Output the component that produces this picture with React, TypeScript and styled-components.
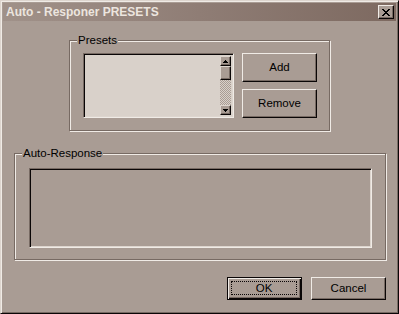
import React from 'react';
import styled, { createGlobalStyle } from 'styled-components';

const face = '#a99c94';
const light = '#ddd5ce';
const white = '#f0ebe6';
const shadow = '#776a63';
const dark = '#0a0606';
const field = '#d9d1ca';

const GlobalStyle = createGlobalStyle`
  html, body {
    margin: 0;
    padding: 0;
    background: ${face};
  }
  body {
    font-family: "Liberation Sans", Arial, sans-serif;
    font-size: 11px;
    color: #000;
  }
`;

const Window = styled.div`
  box-sizing: border-box;
  width: 399px;
  height: 314px;
  background: ${face};
  border: 1px solid;
  border-color: ${light} ${dark} ${dark} ${light};
  box-shadow: inset 1px 1px 0 ${white}, inset -1px -1px 0 ${shadow};
  padding: 2px;
  display: flex;
  flex-direction: column;
`;

const TitleBar = styled.div`
  height: 18px;
  display: flex;
  align-items: center;
  justify-content: space-between;
  padding: 0 2px 0 3px;
  background: linear-gradient(90deg, #a09189 0%, #8f7d75 50%, #7d6960 100%);
`;

const Title = styled.span`
  font-weight: bold;
  font-size: 12px;
  color: #ece5df;
`;

const CloseButton = styled.div`
  box-sizing: border-box;
  width: 16px;
  height: 14px;
  background: ${face};
  border: 1px solid;
  border-color: ${white} ${dark} ${dark} ${white};
  box-shadow: inset -1px -1px 0 ${shadow};
  display: flex;
  align-items: center;
  justify-content: center;
`;

const Body = styled.div`
  flex: 1;
  display: flex;
  flex-direction: column;
`;

const Group = styled.div<{ $w: number; $h: number }>`
  position: relative;
  box-sizing: border-box;
  width: ${(p) => p.$w}px;
  height: ${(p) => p.$h}px;
  border: 1px solid ${shadow};
  box-shadow: inset 1px 1px 0 ${white}, 1px 1px 0 ${white};
`;

const Legend = styled.span`
  position: absolute;
  top: -7px;
  left: 7px;
  padding: 0 1px;
  line-height: 13px;
  font-size: 11.5px;
  background: ${face};
`;

const PresetsGroup = styled(Group)`
  margin: 19px 0 0 66px;
  padding: 12px 0 0 13px;
  display: flex;
  gap: 8px;
`;

const ResponseGroup = styled(Group)`
  margin: 22px 0 0 11px;
  padding: 14px 0 0 14px;
`;

const Sunken = styled.div`
  box-sizing: border-box;
  border: 1px solid;
  border-color: ${shadow} ${white} ${white} ${shadow};
  box-shadow: inset 1px 1px 0 ${dark}, inset -1px -1px 0 ${light};
`;

const ListBox = styled(Sunken)`
  width: 151px;
  height: 65px;
  background: ${field};
  display: flex;
  justify-content: flex-end;
  padding: 2px;
`;

const ScrollBar = styled.div`
  width: 11px;
  display: flex;
  flex-direction: column;
`;

const ScrollPart = styled.div<{ $h: number }>`
  box-sizing: border-box;
  height: ${(p) => p.$h}px;
  background: ${face};
  border: 1px solid;
  border-color: ${light} ${dark} ${dark} ${light};
  box-shadow: inset -1px -1px 0 ${shadow};
  display: flex;
  align-items: center;
  justify-content: center;
`;

const Track = styled.div`
  flex: 1;
  background: repeating-conic-gradient(${field} 0 25%, ${face} 0 50%) 0 0 / 2px 2px;
`;

const ButtonColumn = styled.div`
  display: flex;
  flex-direction: column;
  gap: 7px;
`;

const Button = styled.div<{ $h: number }>`
  box-sizing: border-box;
  width: 75px;
  height: ${(p) => p.$h}px;
  background: ${face};
  border: 1px solid;
  border-color: ${white} ${dark} ${dark} ${white};
  box-shadow: inset -1px -1px 0 ${shadow};
  display: flex;
  align-items: center;
  justify-content: center;
  font-size: 11.5px;
  padding-bottom: 1px;
`;

const DefaultButton = styled(Button)`
  border: 1px solid ${dark};
  box-shadow: inset 1px 1px 0 ${white}, inset -1px -1px 0 ${dark}, inset -2px -2px 0 ${shadow};
  padding: 3px 4px 4px 3px;
`;

const FocusRect = styled.div`
  flex: 1;
  align-self: stretch;
  border: 1px dotted ${dark};
  display: flex;
  align-items: center;
  justify-content: center;
`;

const ResponseBox = styled(Sunken)`
  width: 343px;
  height: 80px;
  background: ${face};
`;

const Footer = styled.div`
  display: flex;
  justify-content: flex-end;
  gap: 9px;
  margin: 17px 10px 0 0;
`;

const Arrow = ({ up }: { up?: boolean }) => (
  <svg width="5" height="3" viewBox="0 0 5 3">
    <path d={up ? 'M2 0h1v1h1v1h1v1H0V2h1V1h1z' : 'M0 0h5v1H4v1H3v1H2V2H1V1H0z'} fill="#000" />
  </svg>
);

const CloseIcon = () => (
  <svg width="8" height="7" viewBox="0 0 8 7">
    <path
      d="M0 0h2v1h1v1h2V1h1V0h2v1H7v1H6v1H5v1h1v1h1v1h1v1H6V6H5V5H3v1H2v1H0V6h1V5h1V4h1V3H2V2H1V1H0z"
      fill="#000"
    />
  </svg>
);

export default function App() {
  return (
    <>
      <GlobalStyle />
      <Window>
        <TitleBar>
          <Title>Auto - Responer PRESETS</Title>
          <CloseButton>
            <CloseIcon />
          </CloseButton>
        </TitleBar>
        <Body>
          <PresetsGroup $w={261} $h={91}>
            <Legend>Presets</Legend>
            <ListBox>
              <ScrollBar>
                <ScrollPart $h={10}>
                  <Arrow up />
                </ScrollPart>
                <ScrollPart $h={14} />
                <Track />
                <ScrollPart $h={10}>
                  <Arrow />
                </ScrollPart>
              </ScrollBar>
            </ListBox>
            <ButtonColumn>
              <Button $h={29}>Add</Button>
              <Button $h={29}>Remove</Button>
            </ButtonColumn>
          </PresetsGroup>
          <ResponseGroup $w={372} $h={107}>
            <Legend>Auto-Response</Legend>
            <ResponseBox />
          </ResponseGroup>
          <Footer>
            <DefaultButton $h={23}>
              <FocusRect>OK</FocusRect>
            </DefaultButton>
            <Button $h={23}>Cancel</Button>
          </Footer>
        </Body>
      </Window>
    </>
  );
}
